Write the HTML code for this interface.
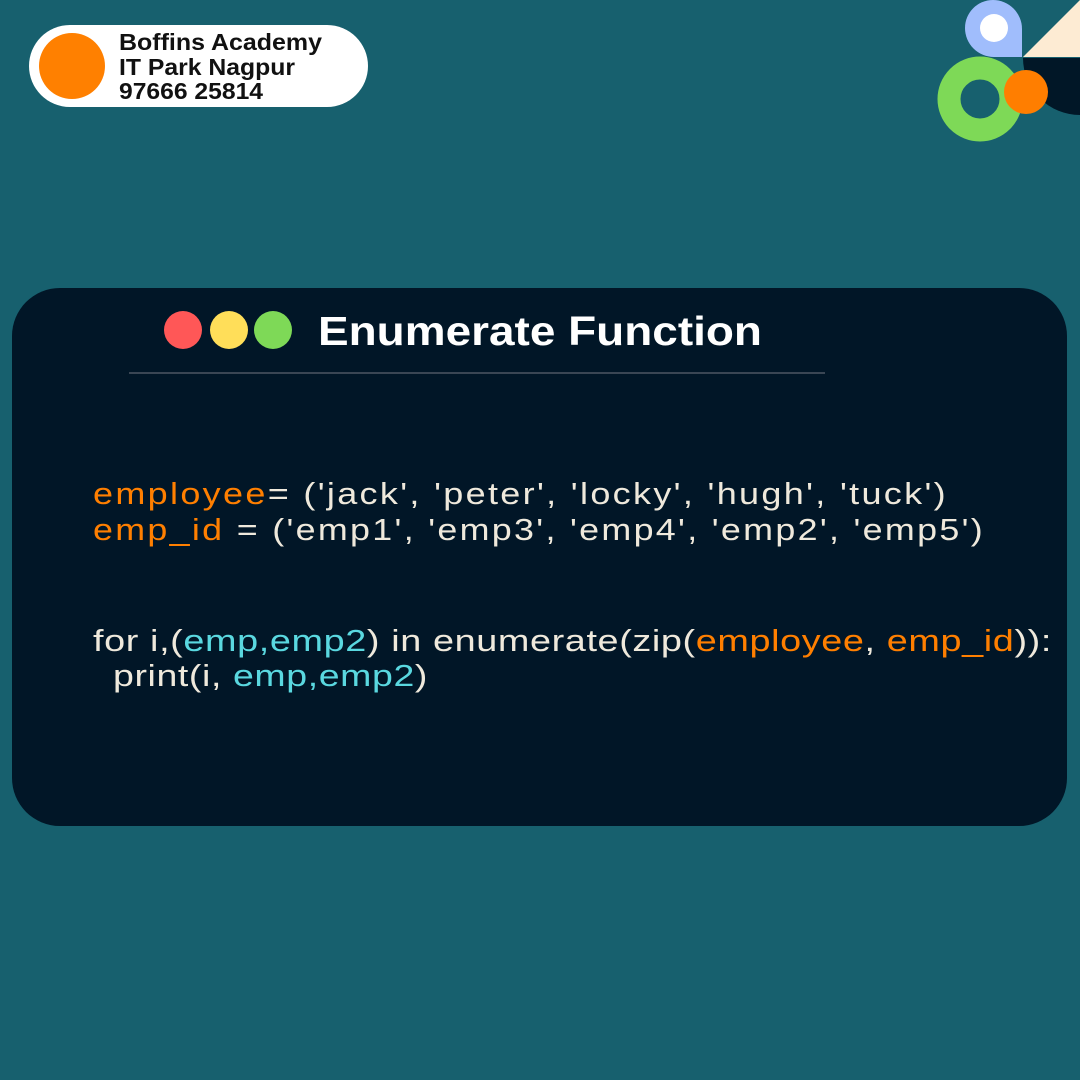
<!DOCTYPE html>
<html><head><meta charset="utf-8"><style>
html,body{margin:0;padding:0}
body{width:1080px;height:1080px;background:#17606e;position:relative;overflow:hidden;font-family:"Liberation Sans",sans-serif}
</style></head><body>
<svg width="1080" height="1080" viewBox="0 0 1080 1080" style="position:absolute;left:0;top:0">
  <rect x="29" y="25" width="339" height="82" rx="41" fill="#fff"/>
  <circle cx="72" cy="66" r="33" fill="#ff8000"/>
  <g font-family="Liberation Sans, sans-serif" font-weight="bold" font-size="23" fill="#111">
    <text x="119" y="50" textLength="203" lengthAdjust="spacingAndGlyphs">Boffins Academy</text>
    <text x="119" y="75" textLength="176" lengthAdjust="spacingAndGlyphs">IT Park Nagpur</text>
    <text x="119" y="99" textLength="144" lengthAdjust="spacingAndGlyphs">97666 25814</text>
  </g>
  <path d="M1022,57 L994,57 A29,29 0 0 1 965,28 A28,28 0 0 1 993,0 A29,29 0 0 1 1022,29 Z" fill="#a0bdfc"/>
  <circle cx="994" cy="28" r="14" fill="#fff"/>
  <polygon points="1023,57 1080,0 1080,57" fill="#fdebd3"/>
  <path d="M1023,58 L1080,58 L1080,115 A57,57 0 0 1 1023,58 Z" fill="#011727"/>
  <circle cx="980" cy="99" r="31" fill="none" stroke="#7ed957" stroke-width="23"/>
  <circle cx="1026" cy="92" r="22" fill="#ff7e00"/>
  <rect x="12" y="288" width="1055" height="538" rx="48" fill="#011627"/>
  <circle cx="183" cy="330" r="19" fill="#ff5757"/>
  <circle cx="229" cy="330" r="19" fill="#ffde59"/>
  <circle cx="273" cy="330" r="19" fill="#7ed957"/>
  <text x="318" y="345" font-family="Liberation Sans, sans-serif" font-weight="bold" font-size="41" fill="#fff" textLength="444" lengthAdjust="spacingAndGlyphs">Enumerate Function</text>
  <rect x="129" y="372" width="696" height="2" fill="#3a4654"/>
  <g font-family="Liberation Sans, sans-serif" font-size="31" fill="#efe9dc">
    <text x="93" y="504" letter-spacing="2" textLength="855" lengthAdjust="spacingAndGlyphs"><tspan fill="#ff7f00">employee</tspan>= ('jack', 'peter', 'locky', 'hugh', 'tuck')</text>
    <text x="93" y="540" letter-spacing="2" textLength="892" lengthAdjust="spacingAndGlyphs"><tspan fill="#ff7f00">emp_id</tspan> = ('emp1', 'emp3', 'emp4', 'emp2', 'emp5')</text>
    <text x="93" y="651" letter-spacing="0.5" textLength="959" lengthAdjust="spacingAndGlyphs">for i,(<tspan fill="#5ad8e0">emp,emp2</tspan>) in enumerate(zip(<tspan fill="#ff7f00">employee</tspan>, <tspan fill="#ff7f00">emp_id</tspan>)):</text>
    <text x="113" y="686" letter-spacing="0.5" textLength="315" lengthAdjust="spacingAndGlyphs">print(i, <tspan fill="#5ad8e0">emp,emp2</tspan>)</text>
  </g>
</svg>
</body></html>
